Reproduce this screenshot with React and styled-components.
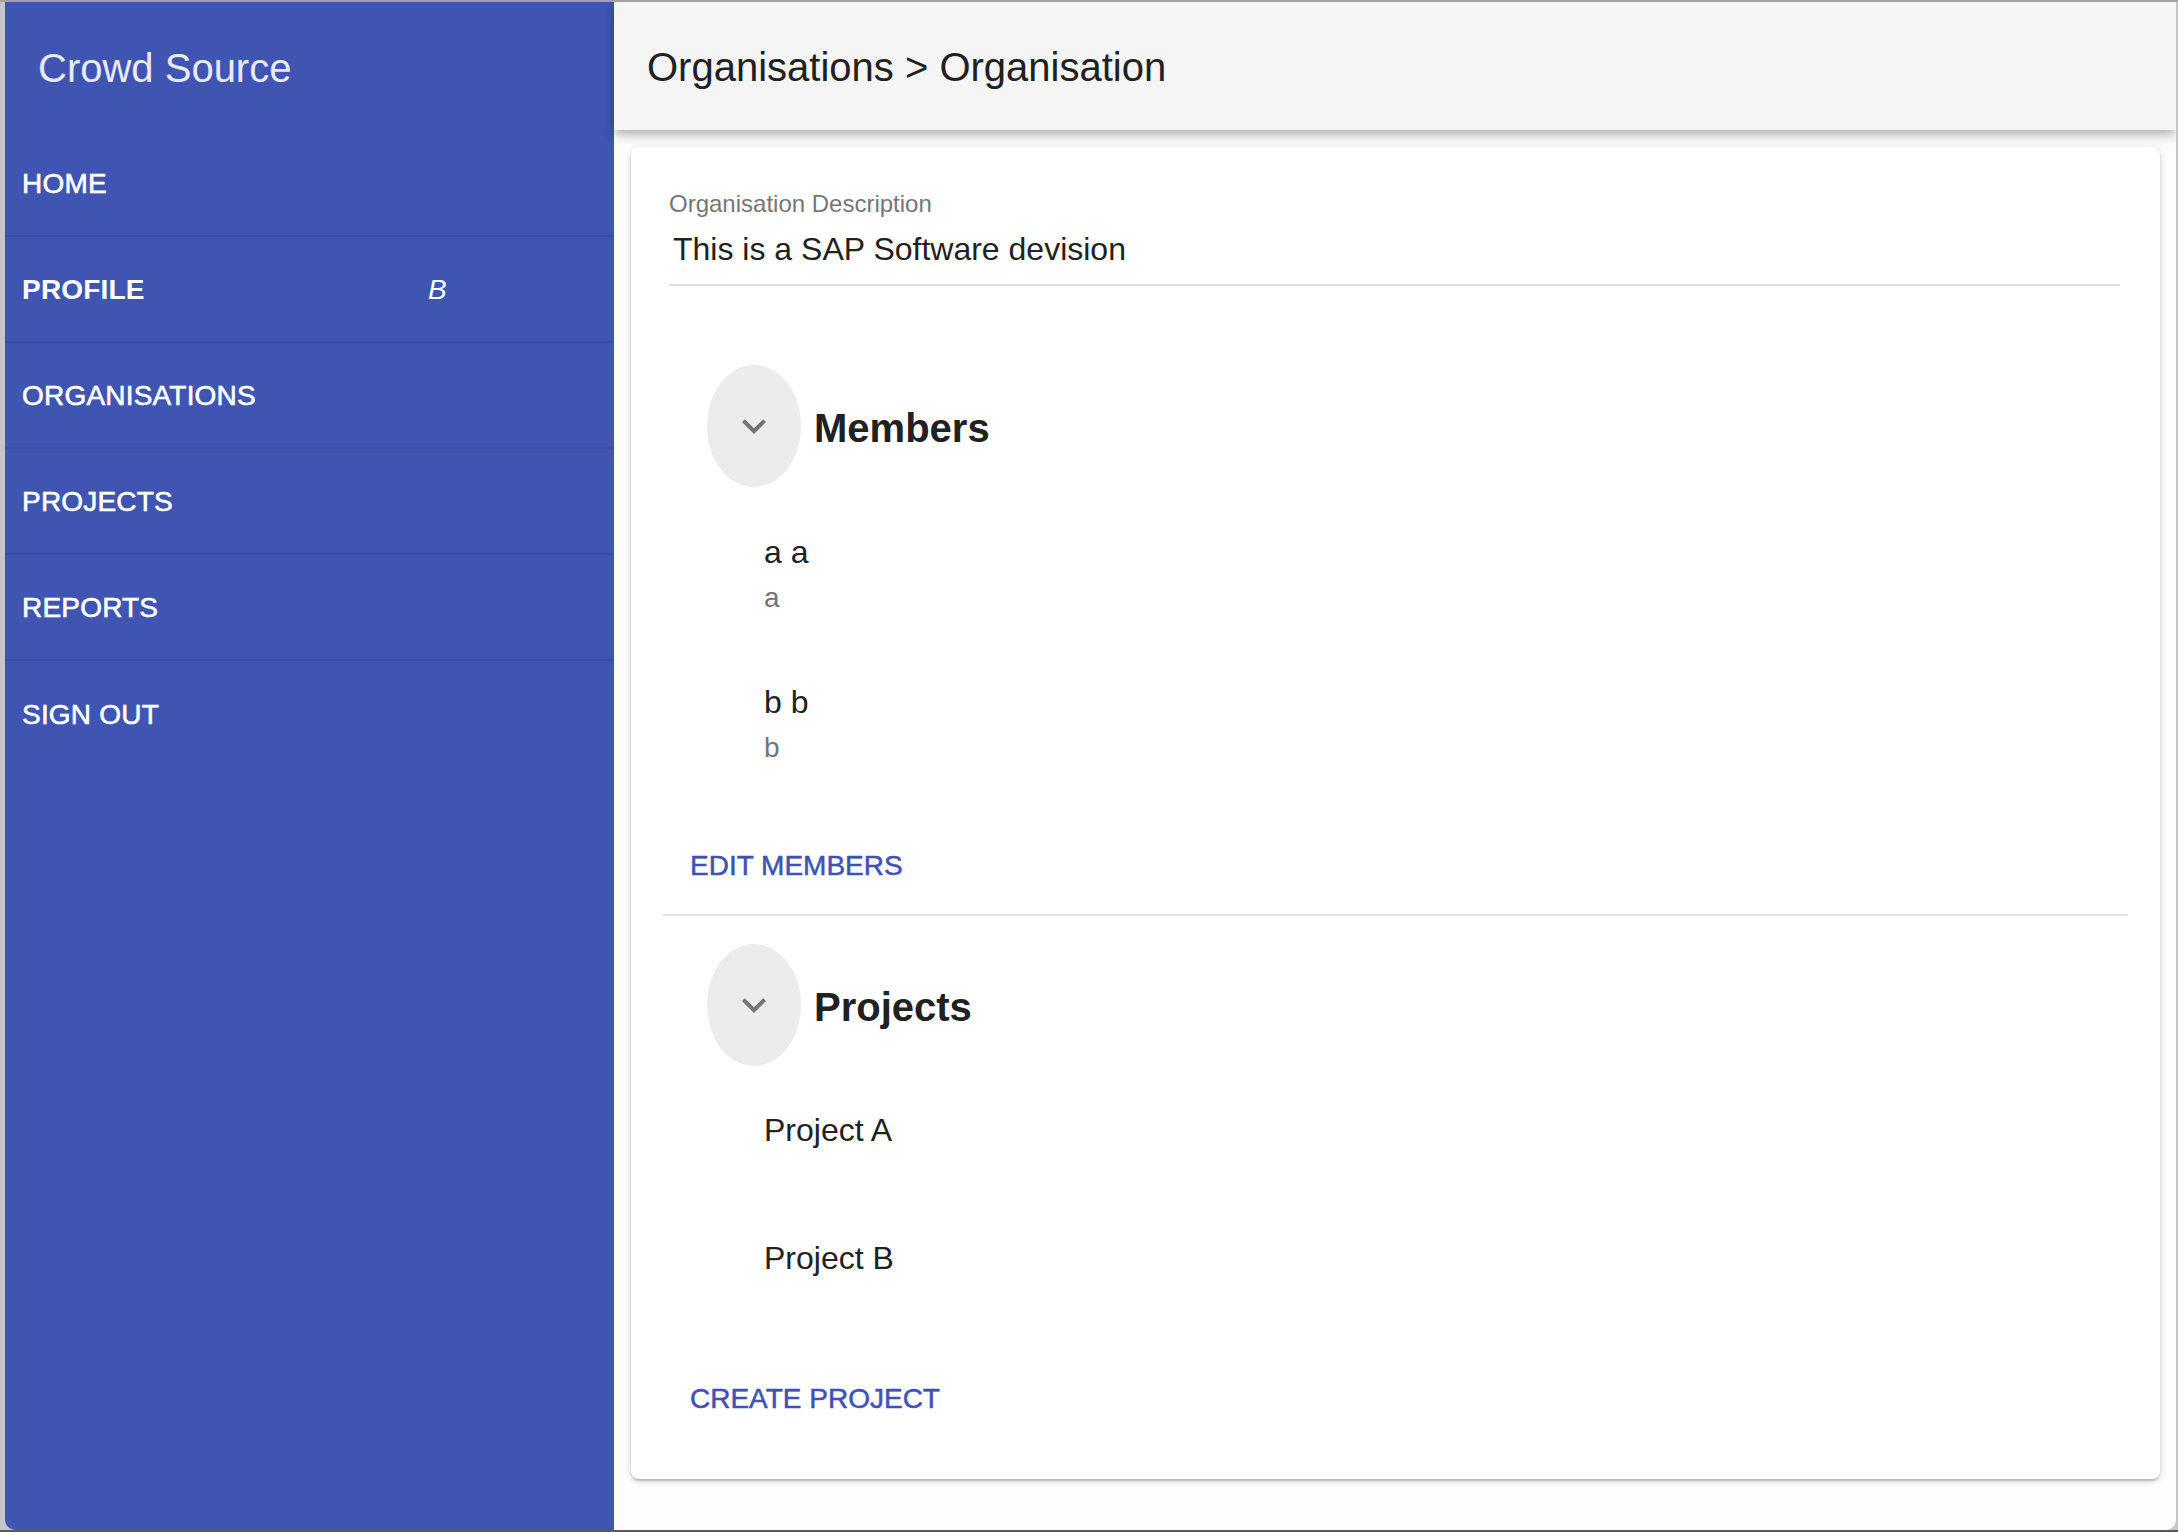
import React from "react";
import styled, { createGlobalStyle } from "styled-components";

const Global = createGlobalStyle`
  html, body {
    margin: 0;
    padding: 0;
    width: 2178px;
    height: 1532px;
    overflow: hidden;
    background: #c6c6c6;
    font-family: "Liberation Sans", Arial, Helvetica, sans-serif;
  }
  * { box-sizing: border-box; }
`;

const Desktop = styled.div`
  width: 2178px;
  height: 1532px;
  padding: 2px 2px 2px 5px;
  background: linear-gradient(#a3a3a3 0 2px, #c6c6c6 2px 1530px, #5a5a5a 1530px);
`;

const Window = styled.div`
  display: flex;
  height: 1528px;
  width: 2171px;
  border-radius: 0 0 10px 10px;
  overflow: hidden;
  background: #fdfdfd;
`;

const Sidebar = styled.nav`
  width: 609px;
  flex: none;
  background: #4055b2;
  display: flex;
  flex-direction: column;
`;

const Brand = styled.div`
  height: 129px;
  display: flex;
  align-items: center;
  padding-left: 33px;
  padding-top: 4px;
  font-size: 40px;
  color: #e8eaf6;
`;

const NavItem = styled.div`
  height: 106px;
  display: grid;
  grid-template-columns: 406px auto;
  align-items: center;
  padding-left: 17px;
  padding-top: 1px;
  border-bottom: ${(p) => (p.$last ? "none" : "2px solid #3a4ca3")};
  color: #ffffff;
  font-size: 28px;
  font-weight: ${(p) => (p.$active ? 700 : 400)};
  -webkit-text-stroke: ${(p) => (p.$active ? "0" : "0.6px #ffffff")};
  letter-spacing: 0.2px;
`;

const NavBadge = styled.span`
  font-style: italic;
  font-weight: 400;
  -webkit-text-stroke: 0;
  font-size: 28px;
`;

const Main = styled.main`
  flex: 1;
  display: flex;
  flex-direction: column;
  min-width: 0;
`;

const TopBar = styled.header`
  height: 128px;
  flex: none;
  background: #f5f5f5;
  display: flex;
  align-items: center;
  padding-left: 33px;
  padding-top: 2px;
  position: relative;
  z-index: 1;
  box-shadow: 0 4px 8px -2px rgba(0, 0, 0, 0.2), 0 8px 10px rgba(0, 0, 0, 0.1),
    0 2px 18px rgba(0, 0, 0, 0.08);
`;

const PageTitle = styled.h1`
  margin: 0;
  font-size: 40px;
  font-weight: 400;
  color: #212121;
`;

const Content = styled.div`
  flex: 1;
  padding: 17px 16px 0 17px;
`;

const Card = styled.section`
  background: #ffffff;
  border-radius: 8px;
  padding: 45px 32px 62px;
  box-shadow: 0 2px 6px rgba(0, 0, 0, 0.18), 0 2px 2px rgba(0, 0, 0, 0.1),
    0 4px 2px -2px rgba(0, 0, 0, 0.08);
`;

const Field = styled.div`
  margin: 0 8px 0 6px;
  padding-bottom: 16px;
  border-bottom: 2px solid #dedede;
`;

const FieldLabel = styled.div`
  font-size: 24px;
  line-height: 24px;
  color: #767676;
`;

const FieldValue = styled.div`
  margin-top: 14px;
  padding-left: 4px;
  font-size: 32px;
  line-height: 38px;
  color: #212121;
`;

const Section = styled.div`
  margin-top: ${(p) => p.$top}px;
`;

const SectionHeader = styled.div`
  display: flex;
  align-items: center;
  height: 122px;
`;

const ExpandButton = styled.button`
  width: 94px;
  height: 122px;
  margin-left: 44px;
  border: none;
  border-radius: 50%;
  background: #ececec;
  display: flex;
  align-items: center;
  justify-content: center;
  padding: 0;
  cursor: pointer;
`;

const SectionTitle = styled.h2`
  margin: 0 0 0 13px;
  padding-top: 4px;
  font-size: 40px;
  font-weight: 700;
  color: #212121;
`;

const List = styled.div`
  padding-top: ${(p) => p.$top || 0}px;
`;

const MemberItem = styled.div`
  padding: 29px 0 29px 101px;
`;

const Primary = styled.div`
  font-size: 32px;
  line-height: 46px;
  color: #212121;
`;

const Secondary = styled.div`
  font-size: 28px;
  line-height: 46px;
  color: #757575;
`;

const ProjectItem = styled.div`
  height: 128px;
  display: flex;
  align-items: center;
  padding-left: 101px;
  font-size: 32px;
  color: #212121;
`;

const TextButton = styled.button`
  display: block;
  margin-top: ${(p) => p.$top}px;
  margin-left: 27px;
  padding: 0;
  border: none;
  background: none;
  font-family: inherit;
  font-size: 28px;
  line-height: 36px;
  color: #3f51b5;
  -webkit-text-stroke: 0.5px #3f51b5;
  cursor: pointer;
`;

const Divider = styled.hr`
  margin: 30px 0 0;
  border: none;
  height: 2px;
  background: #e2e2e2;
`;

const Chevron = () => (
  <svg width="48" height="48" viewBox="0 0 24 24" aria-hidden="true">
    <path
      fill="#757575"
      d="M7.41 8.59L12 13.17l4.59-4.58L18 10l-6 6-6-6 1.41-1.41z"
    />
  </svg>
);

const navItems = [
  { label: "HOME" },
  { label: "PROFILE", active: true, badge: "B" },
  { label: "ORGANISATIONS" },
  { label: "PROJECTS" },
  { label: "REPORTS" },
  { label: "SIGN OUT", last: true },
];

const members = [
  { name: "a a", id: "a" },
  { name: "b b", id: "b" },
];

const projects = ["Project A", "Project B"];

export default function App() {
  return (
    <>
      <Global />
      <Desktop>
        <Window>
          <Sidebar>
            <Brand>Crowd Source</Brand>
            {navItems.map((item) => (
              <NavItem key={item.label} $active={item.active} $last={item.last}>
                <span>{item.label}</span>
                {item.badge && <NavBadge>{item.badge}</NavBadge>}
              </NavItem>
            ))}
          </Sidebar>
          <Main>
            <TopBar>
              <PageTitle>Organisations &gt; Organisation</PageTitle>
            </TopBar>
            <Content>
              <Card>
                <Field>
                  <FieldLabel>Organisation Description</FieldLabel>
                  <FieldValue>This is a SAP Software devision</FieldValue>
                </Field>

                <Section $top={79}>
                  <SectionHeader>
                    <ExpandButton aria-label="collapse members">
                      <Chevron />
                    </ExpandButton>
                    <SectionTitle>Members</SectionTitle>
                  </SectionHeader>
                  <List $top={13}>
                    {members.map((m) => (
                      <MemberItem key={m.name}>
                        <Primary>{m.name}</Primary>
                        <Secondary>{m.id}</Secondary>
                      </MemberItem>
                    ))}
                  </List>
                  <TextButton $top={48}>EDIT MEMBERS</TextButton>
                </Section>

                <Divider />

                <Section $top={28}>
                  <SectionHeader>
                    <ExpandButton aria-label="collapse projects">
                      <Chevron />
                    </ExpandButton>
                    <SectionTitle>Projects</SectionTitle>
                  </SectionHeader>
                  <List>
                    {projects.map((p) => (
                      <ProjectItem key={p}>{p}</ProjectItem>
                    ))}
                  </List>
                  <TextButton $top={59}>CREATE PROJECT</TextButton>
                </Section>
              </Card>
            </Content>
          </Main>
        </Window>
      </Desktop>
    </>
  );
}
